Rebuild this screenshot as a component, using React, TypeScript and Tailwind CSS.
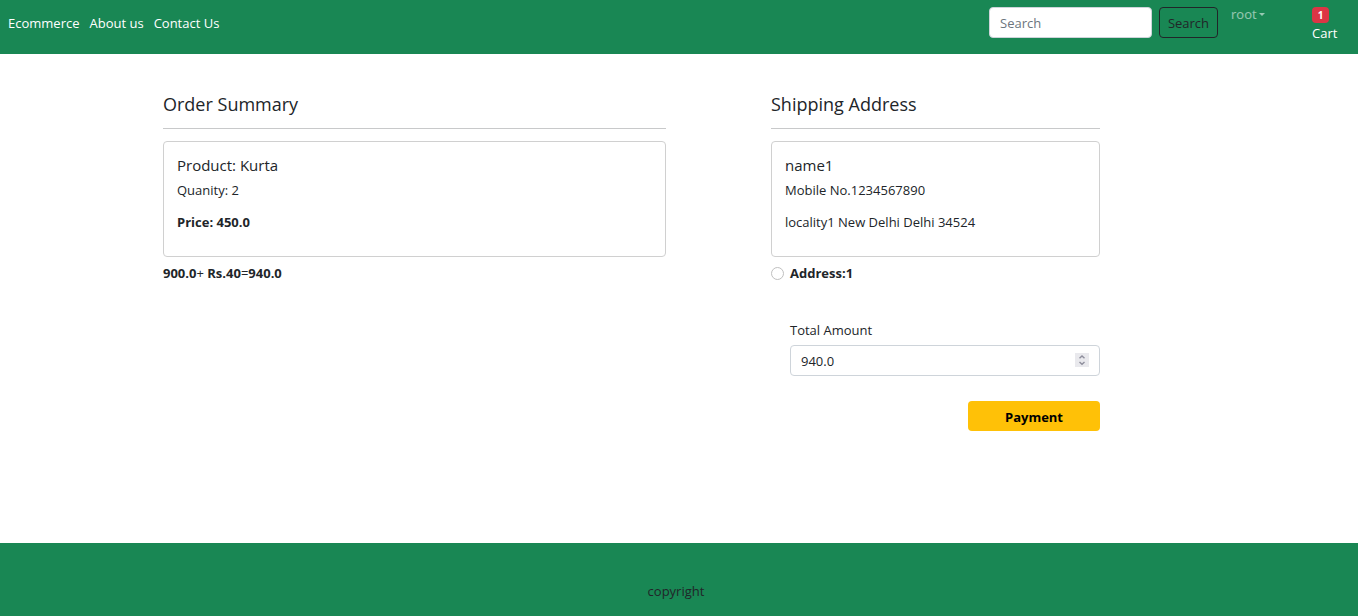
import { useState } from "react";
import type { ReactNode } from "react";

const navLinks = ["Ecommerce", "About us", "Contact Us"];

function Navbar() {
  return (
    <nav className="flex h-[54px] items-start bg-[#198754] px-2 text-white">
      <div className="flex gap-2.5 pt-[13px]">
        {navLinks.map((label) => (
          <a key={label} href="#" className="leading-5">
            {label}
          </a>
        ))}
      </div>
      <form className="ml-auto flex gap-[7px] pt-[7px]" onSubmit={(e) => e.preventDefault()}>
        <input
          type="search"
          aria-label="Search"
          placeholder="Search"
          className="h-[31px] w-[163px] rounded border border-[#ced4da] bg-white px-2.5 text-[#212529] placeholder:text-[#6c757d]"
        />
        <button
          type="submit"
          className="h-[31px] w-[59px] rounded border border-[#212529] pt-0.5 text-center text-[#212529]"
        >
          Search
        </button>
      </form>
      <button
        type="button"
        className="ml-[13px] mt-1 flex w-[81px] items-center gap-0.5 leading-5 text-white/55"
      >
        root
        <svg width="6" height="3" viewBox="0 0 6 3" fill="currentColor" aria-hidden="true">
          <path d="M0 0h6L3 3z" />
        </svg>
      </button>
      <a href="#" className="mr-3.5 flex w-[24px] flex-col items-start pt-[7px]">
        <span className="h-4 w-[17px] rounded bg-[#dc3545] text-center text-[10px] leading-4 font-bold">
          1
        </span>
        <span className="leading-5">Cart</span>
      </a>
    </nav>
  );
}

function Heading({ children }: { children: ReactNode }) {
  return (
    <h1 className="mb-3 border-b border-[#c8c9ca] pb-3 text-lg leading-6">{children}</h1>
  );
}

function Card({ title, detail, children }: { title: string; detail: string; children: ReactNode }) {
  return (
    <div className="rounded border border-[#d0d0d0] px-[13px] pt-[13px] pb-6">
      <h2 className="text-[15px] leading-5">{title}</h2>
      <p className="mt-[5px] leading-5">{detail}</p>
      <p className="mt-3 leading-5">{children}</p>
    </div>
  );
}

export default function App() {
  const [amount, setAmount] = useState("940.0");

  return (
    <div className="flex min-h-screen flex-col bg-white font-['Open_Sans','Noto_Sans',sans-serif] text-[13px] text-[#212529]">
      <Navbar />
      <main className="flex-1 pr-2 pt-[38px]">
        <div className="mx-auto grid max-w-[1044px] grid-cols-12">
          <section className="col-span-6 pr-[9px] pl-2.5">
            <Heading>Order Summary</Heading>
            <Card title="Product: Kurta" detail="Quanity: 2">
              <b>Price: 450.0</b>
            </Card>
            <p className="mt-1.5 leading-5">
              <b>900.0</b>+ <b>Rs.40</b>=<b>940.0</b>
            </p>
          </section>

          <section className="col-span-4 col-start-8 pl-[9px] pr-2.5">
            <Heading>Shipping Address</Heading>
            <form onSubmit={(e) => e.preventDefault()}>
              <Card title="name1" detail="Mobile No.1234567890">
                locality1 New Delhi Delhi 34524
              </Card>
              <div className="mt-1.5 flex items-center gap-1.5">
                <input
                  id="address-1"
                  type="radio"
                  name="address"
                  className="size-[13px] appearance-none rounded-full border border-[#bfbfbf] bg-white checked:border-4 checked:border-[#0d6efd]"
                />
                <label htmlFor="address-1" className="leading-5 font-bold">
                  Address:1
                </label>
              </div>
              <div className="mt-[37px] pl-[19px]">
                <label htmlFor="total-amount" className="block leading-5">
                  Total Amount
                </label>
                <div className="relative mt-[5px]">
                  <input
                    id="total-amount"
                    type="number"
                    step="0.1"
                    value={amount}
                    onChange={(e) => setAmount(e.target.value)}
                    className="block h-[31px] w-full rounded border border-[#ced4da] bg-white px-2.5 [appearance:textfield] [&::-webkit-inner-spin-button]:appearance-none"
                  />
                  <svg
                    className="pointer-events-none absolute top-2 right-[11px]"
                    width="14"
                    height="14"
                    viewBox="0 0 14 14"
                    fill="none"
                    aria-hidden="true"
                  >
                    <rect width="14" height="14" fill="#e9e9ed" />
                    <path d="M4.5 5.3 7 2.9l2.5 2.4M4.5 8.9 7 11.3l2.5-2.4" stroke="#8f8f9d" strokeWidth="1.4" />
                  </svg>
                </div>
              </div>
              <button
                type="submit"
                className="mt-[25px] ml-auto block h-[30px] w-[132px] rounded bg-[#ffc107] pt-[3px] text-center font-bold text-black"
              >
                Payment
              </button>
            </form>
          </section>
        </div>
      </main>
      <footer className="h-[73px] bg-[#198754] pt-[38px] pr-1.5 text-center leading-5">copyright</footer>
    </div>
  );
}
